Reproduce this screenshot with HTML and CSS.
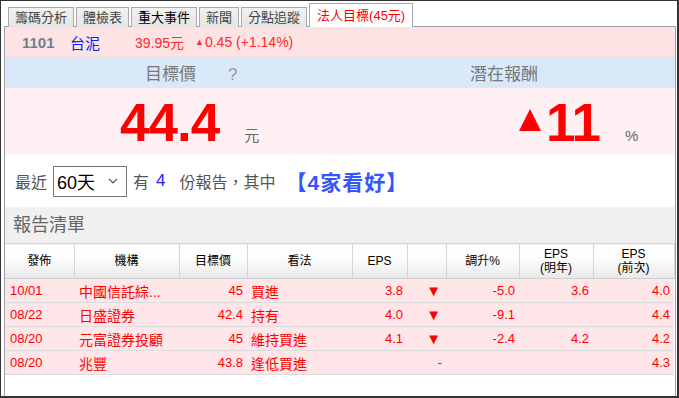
FILE: index.html
```html
<!DOCTYPE html>
<html lang="zh-Hant">
<head>
<meta charset="utf-8">
<link rel="stylesheet" href="styles.css">
</head>
<body>
<div class="frame">
  <div class="tabs">
    <div class="tab">籌碼分析</div>
    <div class="tab">體檢表</div>
    <div class="tab dark">重大事件</div>
    <div class="tab">新聞</div>
    <div class="tab">分點追蹤</div>
    <div class="tab active">法人目標(45元)</div>
  </div>
  <div class="panel">
    <div class="info">
      <span class="code">1101</span>
      <span class="name">台泥</span>
      <span class="price">39.95元</span>
      <span class="chg"><span class="up">▲</span>0.45 (+1.14%)</span>
    </div>
    <div class="labels">
      <div class="half left"><span>目標價</span><span class="q">?</span></div>
      <div class="half right"><span>潛在報酬</span></div>
    </div>
    <div class="bigs">
      <div class="half left">
        <span class="big">44.4</span><span class="unit">元</span>
      </div>
      <div class="half right">
        <svg class="tri" width="22" height="22" viewBox="0 0 22 22"><polygon points="11,0 22,22 0,22" fill="#ff0000"/></svg>
        <span class="big">11</span><span class="unit pct">%</span>
      </div>
    </div>
    <div class="filter">
      <span class="gray">最近</span>
      <div class="select"><span>60天</span><svg width="10" height="6" viewBox="0 0 10 6"><polyline points="1,1 5,5 9,1" fill="none" stroke="#555" stroke-width="1.2"/></svg></div>
      <span class="gray">有</span>
      <span class="num">4</span>
      <span class="gray">份報告，其中</span>
      <span class="good">【4家看好】</span>
    </div>
    <div class="listtitle">報告清單</div>
    <table class="grid">
      <colgroup>
        <col class="c1"><col class="c2"><col class="c3"><col class="c4"><col class="c5"><col class="c6"><col class="c7"><col class="c8"><col class="c9">
      </colgroup>
      <thead>
        <tr>
          <th>發佈</th><th>機構</th><th>目標價</th><th>看法</th><th>EPS</th><th></th><th>調升%</th><th>EPS<br>(明年)</th><th>EPS<br>(前次)</th>
        </tr>
      </thead>
      <tbody>
        <tr><td class="l">10/01</td><td class="l inst">中國信託綜...</td><td class="r">45</td><td class="l view">買進</td><td class="r">3.8</td><td class="c">▼</td><td class="r">-5.0</td><td class="r">3.6</td><td class="r">4.0</td></tr>
        <tr><td class="l">08/22</td><td class="l inst">日盛證券</td><td class="r">42.4</td><td class="l view">持有</td><td class="r">4.0</td><td class="c">▼</td><td class="r">-9.1</td><td class="r"></td><td class="r">4.4</td></tr>
        <tr><td class="l">08/20</td><td class="l inst">元富證券投顧</td><td class="r">45</td><td class="l view">維持買進</td><td class="r">4.1</td><td class="c">▼</td><td class="r">-2.4</td><td class="r">4.2</td><td class="r">4.2</td></tr>
        <tr><td class="l">08/20</td><td class="l inst">兆豐</td><td class="r">43.8</td><td class="l view">逢低買進</td><td class="r"></td><td class="c dash">-</td><td class="r"></td><td class="r"></td><td class="r">4.3</td></tr>
      </tbody>
    </table>
  </div>
</div>
</body>
</html>
```

FILE: styles.css
```css
* { box-sizing: border-box; }
html, body { margin: 0; padding: 0; background: #fff; }
body {
  font-family: "Liberation Sans", "Noto Sans CJK TC", sans-serif;
  color: #333;
}
.frame {
  width: 679px;
  height: 398px;
  border-left: 1px solid #333;
  border-top: 1px solid #333;
  border-bottom: 2px solid #333;
  border-right: 2px solid #333;
  padding: 2px 1px 0 3px;
  overflow: hidden;
  display: flex;
  flex-direction: column;
}
.tabs {
  height: 24px;
  display: flex;
  align-items: flex-end;
  gap: 2px;
  padding-left: 4px;
  position: relative;
  z-index: 2;
  margin-bottom: -1px;
}
.tab {
  height: 20px;
  padding: 0 6px;
  border: 1px solid #a9a9a9;
  border-bottom: none;
  background: linear-gradient(#f2f2f2, #e4e4e4);
  font-size: 13px;
  line-height: 19px;
  color: #444;
  white-space: nowrap;
}
.tab.dark { color: #000; }
.tab.active {
  height: 24px;
  line-height: 23px;
  background: #fff;
  color: #f00;
  padding: 0 7px;
  border-color: #a9a9a9;
}
.panel {
  flex: 1;
  border: 1px solid #a0a0a8;
  border-bottom: none;
  display: flex;
  flex-direction: column;
  background: #fff;
}
.info {
  height: 30px;
  background: #fde3e3;
  display: flex;
  align-items: center;
  font-size: 14px;
  padding-left: 17px;
}
.code { color: #6f7f8f; font-weight: bold; width: 48px; font-size: 15px; }
.name { color: #0022ff; width: 65px; font-size: 15px; }
.price { color: #ff2a2a; width: 60px; }
.chg { color: #ff2a2a; }
.up { font-size: 9px; vertical-align: 2px; margin-right: 1px; }
.labels {
  height: 31px;
  background: #d9e9f9;
  display: flex;
  align-items: center;
  font-size: 17px;
  color: #777;
}
.half { width: 50%; display: flex; align-items: baseline; }
.labels .left { padding-left: 140px; }
.labels .right { padding-left: 130px; }
.q { margin-left: 32px; color: #999; }
.bigs {
  height: 67px;
  background: #fff0f3;
  display: flex;
  align-items: flex-start;
  padding-top: 10px;
}
.bigs .half { height: 50px; align-items: flex-end; }
.bigs .left { padding-left: 115px; }
.bigs .right { padding-left: 179px; }
.big {
  font-size: 53px;
  line-height: 50px;
  font-weight: bold;
  color: #ff0000;
  letter-spacing: -1px;
}
.unit { font-size: 15px; color: #666; margin-left: 25px; line-height: 20px; padding-bottom: 2px; }
.unit.pct { margin-left: 25px; }
.tri { align-self: flex-start; margin-top: 11px; margin-right: 5px; }
.filter {
  height: 52px;
  display: flex;
  align-items: center;
  padding-left: 10px;
  font-size: 16px;
}
.gray { color: #555; }
.select {
  width: 74px;
  height: 31px;
  border: 1px solid #767676;
  margin: 0 6px 0 6px;
  display: flex;
  align-items: center;
  justify-content: space-between;
  padding: 0 8px 0 3px;
  color: #000;
  font-size: 18px;
}
.num { color: #2020ff; margin: 0 14px 0 7px; font-size: 17px; }
.good {
  color: #3355ff;
  font-size: 21px;
  font-weight: bold;
  margin-left: 10px;
  letter-spacing: 1px;
}
.listtitle {
  height: 36px;
  background: #f0f0f0;
  color: #666;
  font-size: 18px;
  line-height: 36px;
  padding-left: 8px;
}
.grid {
  width: 669px;
  border-collapse: collapse;
  table-layout: fixed;
  font-size: 13px;
}
.c1 { width: 69px; } .c2 { width: 105px; } .c3 { width: 68px; } .c4 { width: 105px; }
.c5 { width: 55px; } .c6 { width: 39px; } .c7 { width: 73px; } .c8 { width: 74px; } .c9 { width: 81px; }
.grid th {
  height: 35px;
  padding: 0;
  background: linear-gradient(#ffffff, #fafafa 50%, #e9e9e9);
  border-top: 1px solid #d4d4d4;
  border-right: 1px solid #d4d4d4;
  border-bottom: 1px solid #cfcfcf;
  font-weight: normal;
  color: #000;
  font-size: 12px;
  line-height: 14px;
}
.grid td {
  height: 24px;
  padding: 0 3px;
  background: #ffe6e9;
  color: #ff0000;
  border-bottom: 1px solid #dcdcdc;
  white-space: nowrap;
  overflow: hidden;
}
.grid td.l { text-align: left; padding-left: 5px; }
.grid td.inst { padding-left: 5px; font-size: 14px; }
.grid td.view { padding-left: 4px; font-size: 14px; }
.grid td.r { text-align: right; padding-right: 4px; }
.grid td.c { text-align: right; padding-right: 5px; font-size: 15px; }
.grid td.dash { font-size: 13px; padding-right: 4px; }
```
